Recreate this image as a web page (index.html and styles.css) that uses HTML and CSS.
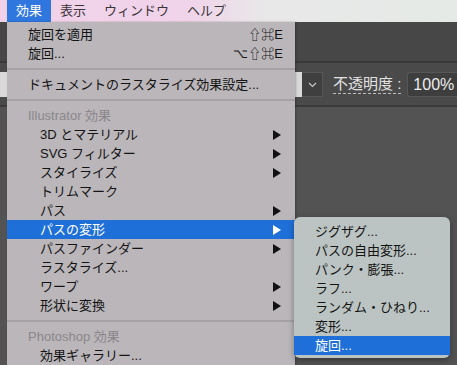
FILE: index.html
```html
<!DOCTYPE html>
<html lang="ja">
<head>
    <meta charset="UTF-8">
    <title>効果メニュー</title>
    <link rel="stylesheet" href="styles.css">
</head>
<body>
    <div class="screen">
        <div class="menubar">
            <span class="menubar-item active">効果</span>
            <span class="menubar-item">表示</span>
            <span class="menubar-item">ウィンドウ</span>
            <span class="menubar-item">ヘルプ</span>
        </div>

        <div class="app">
            <div class="panel-top"></div>
            <div class="control-bar">
                <div class="select-field"></div>
                <div class="chevron-box">
                    <svg width="9" height="6" viewBox="0 0 9 6"><path d="M1 1l3.5 3.5L8 1" fill="none" stroke="#c8c8c8" stroke-width="1.2"/></svg>
                </div>
                <span class="opacity-label">不透明度 :</span>
                <div class="opacity-field">100%</div>
            </div>
            <div class="canvas"></div>
        </div>

        <!-- effect menu -->
        <div class="menu main-menu">
            <div class="item"><span>旋回を適用</span><span class="shortcut">⇧⌘E</span></div>
            <div class="item"><span>旋回...</span><span class="shortcut">⌥⇧⌘E</span></div>
            <div class="separator"></div>
            <div class="item"><span>ドキュメントのラスタライズ効果設定...</span></div>
            <div class="separator"></div>
            <div class="item heading">Illustrator 効果</div>
            <div class="item sub"><span>3D とマテリアル</span><i class="arrow"></i></div>
            <div class="item sub"><span>SVG フィルター</span><i class="arrow"></i></div>
            <div class="item sub"><span>スタイライズ</span><i class="arrow"></i></div>
            <div class="item sub"><span>トリムマーク</span></div>
            <div class="item sub"><span>パス</span><i class="arrow"></i></div>
            <div class="item sub active"><span>パスの変形</span><i class="arrow"></i></div>
            <div class="item sub"><span>パスファインダー</span><i class="arrow"></i></div>
            <div class="item sub"><span>ラスタライズ...</span></div>
            <div class="item sub"><span>ワープ</span><i class="arrow"></i></div>
            <div class="item sub"><span>形状に変換</span><i class="arrow"></i></div>
            <div class="separator"></div>
            <div class="item heading">Photoshop 効果</div>
            <div class="item sub"><span>効果ギャラリー...</span></div>
        </div>

        <!-- submenu: パスの変形 -->
        <div class="menu submenu">
            <div class="item">ジグザグ...</div>
            <div class="item">パスの自由変形...</div>
            <div class="item">パンク・膨張...</div>
            <div class="item">ラフ...</div>
            <div class="item">ランダム・ひねり...</div>
            <div class="item">変形...</div>
            <div class="item active">旋回...</div>
        </div>
    </div>
</body>
</html>
```

FILE: styles.css
```css
* {
    box-sizing: border-box;
}

body {
    margin: 0;
    font-family: "Liberation Sans", "Noto Sans CJK JP", sans-serif;
    font-size: 13px;
    background: #535353;
}

.screen {
    position: relative;
    width: 457px;
    height: 365px;
    overflow: hidden;
}

.menubar {
    height: 22px;
    display: flex;
    padding-left: 7px;
    background: linear-gradient(90deg, #f1d1e9 0%, #f0d4ea 42%, #e8e8e8 58%, #e5eae6 100%);
}

.menubar-item {
    padding: 0 9px;
    line-height: 22px;
    color: #3b3439;
}

.menubar-item.active {
    background: #2f77de;
    color: #fff;
}

.app {
    display: flex;
    flex-direction: column;
}

.panel-top {
    height: 41px;
    background: #474747;
    border-bottom: 2px solid #393939;
}

.control-bar {
    height: 44px;
    display: flex;
    align-items: center;
    background: #4a4a4a;
    border-bottom: 2px solid #3b3b3b;
    padding-top: 1px;
}

.select-field {
    width: 302px;
    height: 25px;
    background: #d9d9d9;
}

.chevron-box {
    width: 21px;
    height: 25px;
    display: flex;
    align-items: center;
    justify-content: center;
    background: #3f3f3f;
    border: 1px solid #575757;
    border-left: none;
}

.opacity-label {
    margin-left: 10px;
    font-size: 15px;
    line-height: 18px;
    color: #e2e2e2;
    border-bottom: 1px dashed #bdbdbd;
}

.opacity-field {
    margin-left: 6px;
    flex: 1;
    height: 25px;
    padding-left: 5px;
    font-size: 16px;
    line-height: 24px;
    color: #ececec;
    background: #3e3e3e;
    border: 1px solid #575757;
    border-right: none;
    border-radius: 3px 0 0 3px;
}

.canvas {
    flex: 1;
    height: 260px;
    background: #4e4e4e;
}

.menu {
    position: absolute;
    color: #141414;
}

.main-menu {
    left: 7px;
    top: 22px;
    width: 288px;
    padding-top: 3px;
    background: #bab6ba;
    box-shadow: 1px 0 2px rgba(0, 0, 0, 0.25);
}

.submenu {
    left: 294px;
    top: 217px;
    width: 156px;
    padding: 5px 0 3px;
    background: #bcc4c3;
    border-radius: 6px;
    box-shadow: 0 2px 6px rgba(0, 0, 0, 0.35);
}

.item {
    height: 19px;
    line-height: 19px;
    display: flex;
    align-items: center;
    padding: 0 12px 0 21px;
    white-space: nowrap;
}

.submenu .item {
    padding-left: 21px;
}

.item.sub {
    padding-left: 33px;
}

.item.heading {
    color: #8a878b;
}

.item.active {
    background: #1f6fd9;
    color: #fff;
}

.shortcut {
    margin-left: auto;
    font-size: 13px;
}

.arrow {
    margin-left: auto;
    margin-right: 2px;
    width: 0;
    height: 0;
    border-left: 8px solid #111;
    border-top: 5px solid transparent;
    border-bottom: 5px solid transparent;
}

.item.active .arrow {
    border-left-color: #fff;
}

.separator {
    height: 12px;
    display: flex;
    align-items: center;
}

.separator::before {
    content: "";
    flex: 1;
    height: 2px;
    background: #a5a2a6;
}
```
